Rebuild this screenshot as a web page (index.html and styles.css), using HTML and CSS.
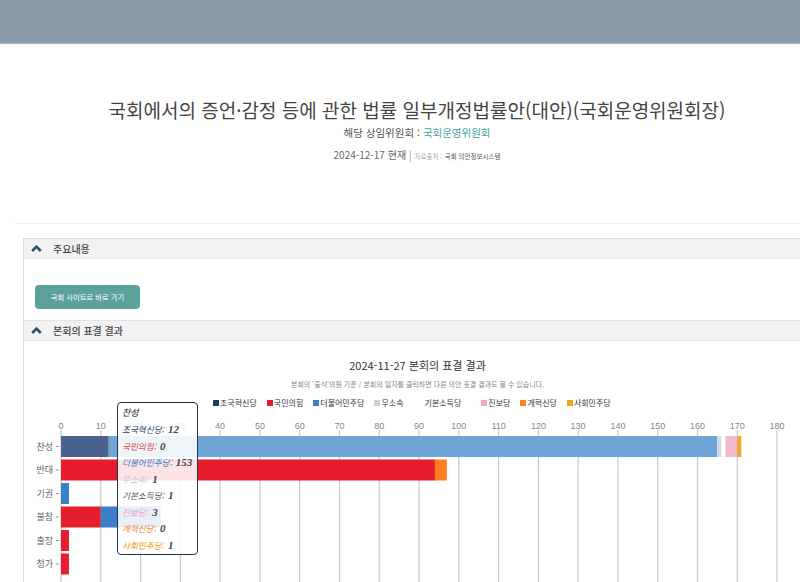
FILE: index.html
```html
<!DOCTYPE html>
<html lang="ko">
<head>
  <meta charset="UTF-8">
  <meta name="viewport" content="width=device-width, initial-scale=1.0">
  <title>본회의 표결 결과</title>
  <link rel="stylesheet" href="styles.css">
</head>
<body>
  <div class="page">
    <div class="topbar"></div>

    <!-- 의안 제목 -->
    <div class="bill-head">
      <h1 class="bill-title">국회에서의 증언·감정 등에 관한 법률 일부개정법률안(대안)(국회운영위원회장)</h1>
      <p class="bill-committee">해당 상임위원회 : <span class="committee-name">국회운영위원회</span></p>
      <p class="bill-date">2024-12-17 현재 <span class="sep">|</span> <span class="source-label">자료출처 :</span> <span class="source-name">국회 의안정보시스템</span></p>
    </div>

    <hr class="divider">

    <div class="panel">
      <div class="panel-head">
        <svg class="chevron" width="11" height="7" viewBox="0 0 11 7"><path d="M1.2 6 L5.5 1.7 L9.8 6" fill="none" stroke="#2b4f66" stroke-width="2.6"/></svg>
        <span>주요내용</span>
      </div>
      <div class="panel-body main-body">
        <button class="site-btn">국회 사이트로 바로 가기</button>
      </div>

      <div class="panel-head">
        <svg class="chevron" width="11" height="7" viewBox="0 0 11 7"><path d="M1.2 6 L5.5 1.7 L9.8 6" fill="none" stroke="#2b4f66" stroke-width="2.6"/></svg>
        <span>본회의 표결 결과</span>
      </div>
      <div class="panel-body chart-body">
        <div class="chart-title">2024-11-27 본회의 표결 결과</div>
        <div class="chart-note">본회의 '출석'의원 기준 / 본회의 일자를 클릭하면 다른 의안 표결 결과도 볼 수 있습니다.</div>
        <ul class="legend">
          <li><i class="mark c-jo"></i>조국혁신당</li>
          <li><i class="mark c-ppp"></i>국민의힘</li>
          <li><i class="mark c-dp"></i>더불어민주당</li>
          <li><i class="mark c-ind"></i>무소속</li>
          <li class="legend-basic"><i class="mark c-basic"></i>기본소득당</li>
          <li><i class="mark c-jin"></i>진보당</li>
          <li><i class="mark c-ref"></i>개혁신당</li>
          <li><i class="mark c-soc"></i>사회민주당</li>
        </ul>

        <svg class="chart" width="787" height="200" viewBox="0 0 787 200">
          <g class="grid">
            <line x1="37" y1="21" x2="37" y2="200"/>
            <line x1="76.8" y1="21" x2="76.8" y2="200"/>
            <line x1="116.6" y1="21" x2="116.6" y2="200"/>
            <line x1="156.3" y1="21" x2="156.3" y2="200"/>
            <line x1="196.1" y1="21" x2="196.1" y2="200"/>
            <line x1="235.9" y1="21" x2="235.9" y2="200"/>
            <line x1="275.7" y1="21" x2="275.7" y2="200"/>
            <line x1="315.5" y1="21" x2="315.5" y2="200"/>
            <line x1="355.2" y1="21" x2="355.2" y2="200"/>
            <line x1="395" y1="21" x2="395" y2="200"/>
            <line x1="434.8" y1="21" x2="434.8" y2="200"/>
            <line x1="474.6" y1="21" x2="474.6" y2="200"/>
            <line x1="514.4" y1="21" x2="514.4" y2="200"/>
            <line x1="554.1" y1="21" x2="554.1" y2="200"/>
            <line x1="593.9" y1="21" x2="593.9" y2="200"/>
            <line x1="633.7" y1="21" x2="633.7" y2="200"/>
            <line x1="673.5" y1="21" x2="673.5" y2="200"/>
            <line x1="713.3" y1="21" x2="713.3" y2="200"/>
            <line x1="753" y1="21" x2="753" y2="200"/>
          </g>
          <g class="axis-x">
            <text x="37" y="20">0</text>
            <text x="76.8" y="20">10</text>
            <text x="116.6" y="20">20</text>
            <text x="156.3" y="20">30</text>
            <text x="196.1" y="20">40</text>
            <text x="235.9" y="20">50</text>
            <text x="275.7" y="20">60</text>
            <text x="315.5" y="20">70</text>
            <text x="355.2" y="20">80</text>
            <text x="395" y="20">90</text>
            <text x="434.8" y="20">100</text>
            <text x="474.6" y="20">110</text>
            <text x="514.4" y="20">120</text>
            <text x="554.1" y="20">130</text>
            <text x="593.9" y="20">140</text>
            <text x="633.7" y="20">150</text>
            <text x="673.5" y="20">160</text>
            <text x="713.3" y="20">170</text>
            <text x="753" y="20">180</text>
          </g>
          <g class="axis-y">
            <text x="29" y="40.5">찬성</text>
            <text x="29" y="64">반대</text>
            <text x="29" y="87.5">기권</text>
            <text x="29" y="111">불참</text>
            <text x="29" y="134.5">출장</text>
            <text x="29" y="158">청가</text>
            <line x1="32" y1="37.5" x2="35" y2="37.5"/>
            <line x1="32" y1="61" x2="35" y2="61"/>
            <line x1="32" y1="84.5" x2="35" y2="84.5"/>
            <line x1="32" y1="108" x2="35" y2="108"/>
            <line x1="32" y1="131.5" x2="35" y2="131.5"/>
            <line x1="32" y1="155" x2="35" y2="155"/>
          </g>
          <!-- 찬성 -->
          <rect x="37" y="27" width="47.74" height="21" fill="#4b6291"/>
          <rect x="84.74" y="27" width="608.63" height="21" fill="#6fa6d7"/>
          <rect x="693.37" y="27" width="3.98" height="21" fill="#d3dde8"/>
          <rect x="701.33" y="27" width="11.93" height="21" fill="#f5b9cd"/>
          <rect x="713.26" y="27" width="3.98" height="21" fill="#f6a52b"/>
          <!-- 반대 -->
          <rect x="37" y="50.5" width="373.93" height="21" fill="#e51d2c"/>
          <rect x="410.93" y="50.5" width="11.94" height="21" fill="#ff7d22"/>
          <!-- 기권 -->
          <rect x="37" y="74" width="7.96" height="21" fill="#3a7fc9"/>
          <!-- 불참 -->
          <rect x="37" y="97.5" width="39.78" height="21" fill="#e51d2c"/>
          <rect x="76.78" y="97.5" width="59.67" height="21" fill="#3a7fc9"/>
          <!-- 출장, 청가 -->
          <rect x="37" y="121" width="7.96" height="21" fill="#e51d2c"/>
          <rect x="37" y="144.5" width="7.96" height="21" fill="#e51d2c"/>
        </svg>

        <div class="tooltip">
          <div class="tip-title">찬성</div>
          <div class="tip-row"><span class="t-jo">조국혁신당:</span><b>12</b></div>
          <div class="tip-row"><span class="t-ppp">국민의힘:</span><b>0</b></div>
          <div class="tip-row"><span class="t-dp">더불어민주당:</span><b>153</b></div>
          <div class="tip-row"><span class="t-ind">무소속:</span><b>1</b></div>
          <div class="tip-row"><span class="t-basic">기본소득당:</span><b>1</b></div>
          <div class="tip-row"><span class="t-jin">진보당:</span><b>3</b></div>
          <div class="tip-row"><span class="t-ref">개혁신당:</span><b>0</b></div>
          <div class="tip-row"><span class="t-soc">사회민주당:</span><b>1</b></div>
        </div>
      </div>
    </div>
  </div>
</body>
</html>
```

FILE: styles.css
```css
html, body {
  margin: 0;
  overflow: hidden;
}
body {
  font-family: "Noto Sans CJK KR", "Noto Sans", sans-serif;
  background-color: #fff;
  color: #333;
}
.page {
  width: 834px;
}
.topbar {
  height: 43px;
  background-color: #8b9baa;
  border-bottom: 1px solid #a9b5c0;
}

/* 의안 제목 */
.bill-head {
  padding-top: 53px;
  text-align: center;
}
.bill-title {
  margin: 0;
  font-size: 19px;
  font-weight: 400;
  line-height: 26px;
  color: #444;
}
.bill-committee {
  margin: 2px 0 0;
  font-size: 10.5px;
  line-height: 16px;
  color: #555;
}
.committee-name {
  color: #3fa59d;
}
.bill-date {
  margin: 7px 0 0;
  font-size: 10px;
  line-height: 14px;
  color: #666;
}
.sep {
  color: #999;
}
.source-label {
  font-size: 6.5px;
  color: #aaa;
}
.source-name {
  font-size: 6.5px;
  color: #555;
}
.divider {
  margin: 60px 15px 0;
  border: none;
  border-top: 1px solid #eee;
}

/* 패널 */
.panel {
  margin: 14px 23px 0;
  border-left: 1px solid #ddd;
}
.panel-head {
  display: flex;
  align-items: center;
  gap: 11px;
  height: 19px;
  padding-left: 7px;
  background-color: #f2f2f2;
  border-top: 1px solid #e2e2e2;
  border-bottom: 1px solid #e6e6e6;
  font-size: 10px;
  font-weight: 500;
  color: #444;
}
.chevron {
  display: block;
}
.main-body {
  padding: 26px 0 11px 11px;
}
.site-btn {
  display: block;
  width: 105px;
  height: 24px;
  padding: 0;
  border: none;
  border-radius: 4px;
  background-color: #5ba39a;
  color: #fff;
  font-family: inherit;
  font-size: 7.3px;
  cursor: pointer;
}

/* 차트 */
.chart-body {
  position: relative;
  padding-top: 16px;
}
.chart-title {
  text-align: center;
  font-size: 11px;
  line-height: 16px;
  color: #333;
}
.chart-note {
  margin-top: 5px;
  text-align: center;
  font-size: 7px;
  line-height: 12px;
  color: #888;
}
.legend {
  display: flex;
  gap: 10px;
  margin: 7px 0 0;
  padding: 0 0 0 189px;
  list-style: none;
  font-size: 8px;
  line-height: 12px;
  color: #333;
}
.legend li {
  display: flex;
  align-items: center;
}
.legend .legend-basic {
  margin-left: 4px;
  margin-right: 10px;
}
.mark {
  width: 6px;
  height: 6px;
  margin-right: 1px;
}
.c-jo { background-color: #1f3864; }
.c-ppp { background-color: #e61e2b; }
.c-dp { background-color: #3a7dc9; }
.c-ind { background-color: #d0d0d0; }
.c-basic { background-color: #fff; }
.c-jin { background-color: #f3a6c3; }
.c-ref { background-color: #ff7f27; }
.c-soc { background-color: #f5a21b; }

.chart {
  display: block;
}
.grid line {
  stroke: #cacaca;
  stroke-width: 1.2;
}
.axis-x text {
  font-family: "Liberation Sans", sans-serif;
  font-size: 9px;
  fill: #888;
  text-anchor: middle;
}
.axis-y text {
  font-size: 9px;
  fill: #666;
  text-anchor: end;
}
.axis-y line {
  stroke: #999;
  stroke-width: 1;
}

/* 툴팁 */
.tooltip {
  position: absolute;
  left: 93px;
  top: 61px;
  width: 81px;
  box-sizing: border-box;
  padding: 2px 4px 1px;
  background-color: rgba(255, 255, 255, 0.88);
  border: 1px solid #26334f;
  border-radius: 4px;
  font-style: italic;
  white-space: nowrap;
}
.tip-title {
  height: 16px;
  font-size: 9px;
  font-weight: 500;
  line-height: 16px;
  color: #444;
}
.tip-row {
  display: flex;
  align-items: baseline;
  gap: 4px;
  height: 16.5px;
  font-size: 8.6px;
  line-height: 16.5px;
}
.tip-row b {
  font-family: "Liberation Serif", serif;
  font-size: 11px;
  font-weight: 700;
  line-height: 16.5px;
  color: #444;
}
.t-jo { color: #2a3a5e; }
.t-ppp { color: #e6404e; }
.t-dp { color: #3a7dc9; }
.t-ind { color: #c8c8c8; }
.t-basic { color: #555; }
.t-jin { color: #f0a0bc; }
.t-ref { color: #ff7f27; }
.t-soc { color: #f39c12; }
```
